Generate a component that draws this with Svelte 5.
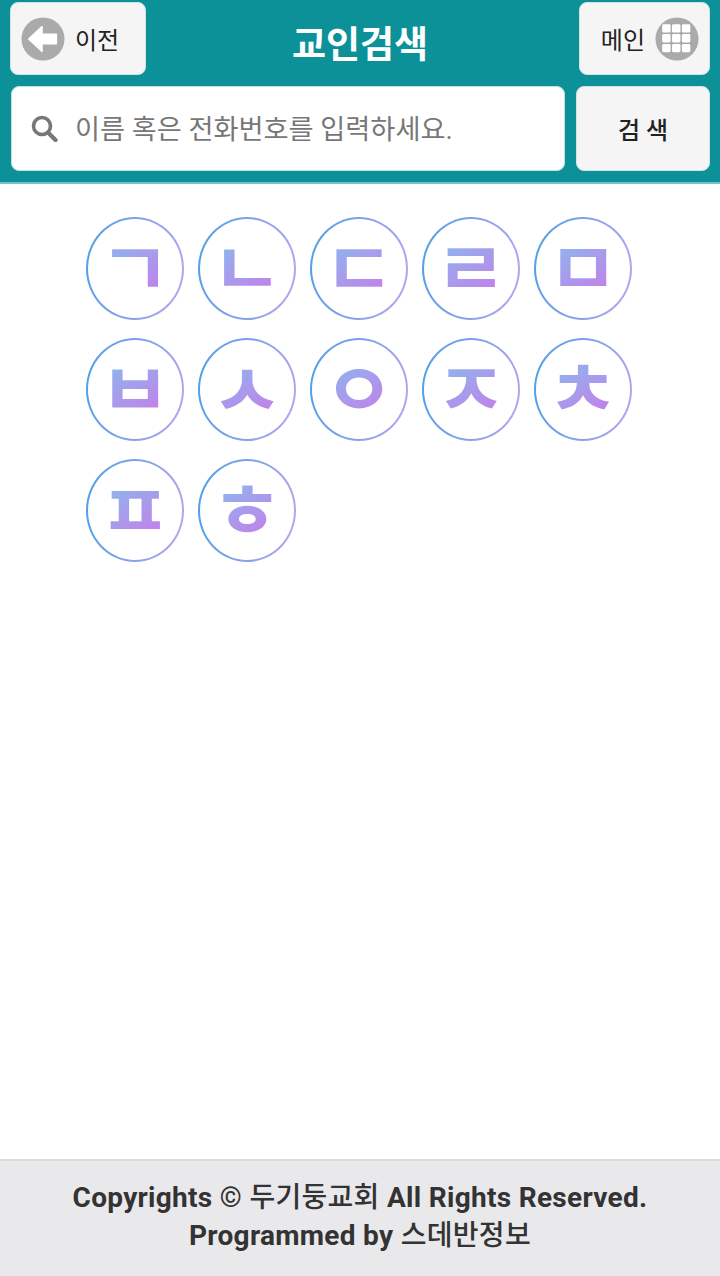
<script>
  const keys = ['ㄱ','ㄴ','ㄷ','ㄹ','ㅁ','ㅂ','ㅅ','ㅇ','ㅈ','ㅊ','ㅍ','ㅎ'];
  const grid = [7.5, 17.8, 28.1];
</script>

<div class="page">
  <header class="head">
    <div class="row top">
      <button class="btn back">
        <svg class="ico" viewBox="0 0 46 46" width="44" height="46">
          <circle cx="23" cy="23" r="22.5" fill="#aaaaaa"/>
          <path d="M8 23 L22 10 V18 H37 V28 H22 V36 Z" fill="#fff" stroke="#fff" stroke-width="1.5" stroke-linejoin="round"/>
        </svg>
        <span>이전</span>
      </button>
      <h1>교인검색</h1>
      <button class="btn main">
        <span>메인</span>
        <svg class="ico" viewBox="0 0 46 46" width="44" height="46">
          <circle cx="23" cy="23" r="22.5" fill="#aaaaaa"/>
          <g fill="#fff">
            {#each grid as y}
              {#each grid as x}
                <rect {x} {y} width="8.8" height="8.8" rx="1.5"/>
              {/each}
            {/each}
          </g>
        </svg>
      </button>
    </div>
    <div class="row search">
      <label class="field">
        <svg viewBox="0 0 28 28" width="28" height="28">
          <circle cx="12" cy="12" r="8.5" fill="none" stroke="#777" stroke-width="3.6"/>
          <path d="M18 18.5 L25.5 26" stroke="#777" stroke-width="4.2" stroke-linecap="round"/>
        </svg>
        <span class="ph">이름 혹은 전화번호를 입력하세요.</span>
      </label>
      <button class="btn go">검 색</button>
    </div>
  </header>

  <main class="grid">
    {#each keys as k}
      <div class="key"><div class="inner"><span class="jamo">{k}</span></div></div>
    {/each}
  </main>

  <footer class="foot">
    <p>Copyrights © <span class="ko">두기둥교회</span> All Rights Reserved.</p>
    <p>Programmed by <span class="ko">스데반정보</span></p>
  </footer>
</div>

<style>
  :global(body) { margin: 0; background: #fff; }
  .page {
    display: flex; flex-direction: column; height: 1276px; width: 720px; overflow: hidden;
    font-family: Roboto, "Noto Sans CJK KR", sans-serif;
  }
  .head {
    background: #0d9199; height: 184px; box-sizing: border-box;
    padding: 2px 10px 0 10px; border-bottom: 2px solid #6cc6cb;
  }
  .row { display: flex; justify-content: space-between; }
  .top { height: 73px; align-items: stretch; }
  .search { margin-top: 11px; height: 85px; gap: 11px; padding-left: 1px; }
  .btn {
    display: flex; align-items: center; box-sizing: border-box;
    background: #f5f5f6; border: 1px solid #cfe3e5; border-radius: 8px; padding: 0;
    font-family: inherit; color: #222; font-size: 24px;
  }
  .back { width: 136px; gap: 10px; justify-content: flex-start; padding-left: 10px; }
  .main { width: 131px; gap: 10px; justify-content: flex-end; padding-right: 10px; }
  .go { width: 134px; font-size: 24px; font-weight: 500; justify-content: center; }
  h1 { margin: 14px 0 0 -5px; font-size: 37px; font-weight: 700; color: #fff; align-self: center; line-height: 1; }
  .field {
    flex: 1; display: flex; align-items: center; gap: 17px; box-sizing: border-box; padding-left: 18px;
    background: #fff; border: 1px solid #bfe2e4; border-radius: 8px;
  }
  .field svg { margin-top: -2px; }
  .ph { color: #777; font-size: 27.2px; margin-top: -3px; }
  .grid {
    flex: 1; display: grid; grid-template-columns: repeat(5, 98px); grid-auto-rows: 103px;
    column-gap: 14px; row-gap: 18px; padding: 33px 0 0 86px; align-content: start;
  }
  .key {
    border-radius: 50%; padding: 2px; box-sizing: border-box;
    background: linear-gradient(100deg, #4aa0e6, #bba6ec);
  }
  .inner {
    width: 100%; height: 100%; border-radius: 50%; background: #fff;
    display: flex; align-items: center; justify-content: center;
  }
  .jamo {
    font-family: "Noto Sans CJK KR", sans-serif; font-weight: 700; font-size: 74px; line-height: 1;
    background: linear-gradient(145deg, #8fb4ee 22%, #bd86ea 78%);
    -webkit-background-clip: text; background-clip: text; color: transparent;
    transform: translateY(-5px) scaleX(1.06);
  }
  .foot {
    height: 117px; box-sizing: border-box; background: #e9e8eb; border-top: 2px solid #dcdcde;
    padding-top: 18px; text-align: center; color: #333; font-size: 28px; font-weight: 700;
    letter-spacing: 0.3px;
  }
  .foot p { margin: 0; line-height: 38px; }
  .ko { font-weight: 500; }
</style>
